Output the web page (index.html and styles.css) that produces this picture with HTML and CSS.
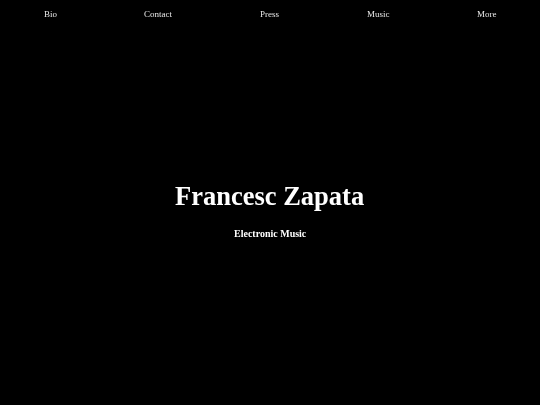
FILE: index.html
```
<!DOCTYPE html>
<html>
<head>
<meta charset="utf-8">
<link rel="stylesheet" href="styles.css">
</head>
<body>
<div class="page">
  <nav class="nav">
    <a class="nav-link" href="#">Bio</a>
    <a class="nav-link" href="#">Contact</a>
    <a class="nav-link" href="#">Press</a>
    <a class="nav-link" href="#">Music</a>
    <a class="nav-link" href="#">More</a>
  </nav>
  <main class="hero">
    <h1 class="title">Francesc Zapata</h1>
    <p class="subtitle">Electronic Music</p>
  </main>
</div>
</body>
</html>
```
FILE: styles.css
```
html, body {
  margin: 0;
  padding: 0;
  background: #000;
  overflow: hidden;
}
body {
  font-family: "Liberation Serif", "Times New Roman", serif;
  color: #fff;
  -webkit-font-smoothing: antialiased;
}
.page {
  display: flex;
  flex-direction: column;
  height: 405px;
}
.nav {
  display: flex;
  justify-content: space-around;
  padding-top: 9px;
}
.nav-link {
  color: #e8e8e8;
  text-decoration: none;
  font-size: 9px;
  line-height: 11px;
  display: inline-block;
  will-change: transform;
}
.hero {
  flex: 1;
  display: flex;
  flex-direction: column;
  align-items: center;
  justify-content: center;
  padding-bottom: 4px;
}
.title {
  margin: 0;
  font-size: 26.5px;
  font-weight: bold;
  line-height: 30px;
  will-change: transform;
}
.subtitle {
  margin: 17px 0 0;
  font-size: 10px;
  font-weight: bold;
  line-height: 12px;
  will-change: transform;
}
```
